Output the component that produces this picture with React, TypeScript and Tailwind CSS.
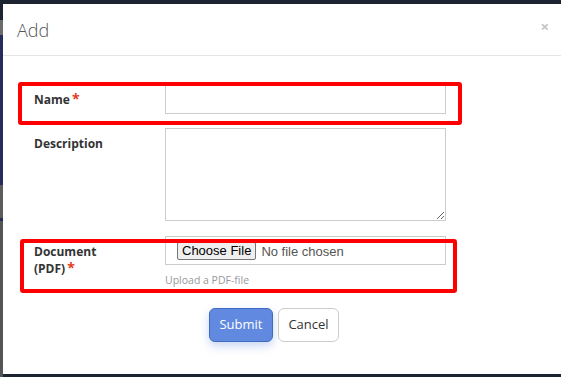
import React from "react";

const Req = () => (
  <span className="ml-[2px] inline-block align-top text-[14px] leading-[15px] text-[#e23b1d]">*</span>
);

const App = () => {
  return (
    <div className="relative flex w-[561px] h-[377px] overflow-hidden bg-[#1c2331] font-['Open_Sans',sans-serif]">
      {/* page behind the modal, only a sliver shows */}
      <div className="flex flex-col w-[3px] shrink-0">
        <div className="h-[20px] bg-[#1c2331]" />
        <div className="h-[15px] bg-[#6b6b6b]" />
        <div className="h-[150px] bg-[#262c5c]" />
        <div className="h-[33px] bg-[#5c5c5c]" />
        <div className="h-[3px] bg-[#262c5c]" />
        <div className="flex-1 bg-[#555]" />
      </div>

      <div className="mt-[4px] h-[370px] flex-1 bg-white flex flex-col">
        <div className="h-[52px] shrink-0 border-b border-[#e5e5e5] flex items-center justify-between pl-[14px] pr-[12px]">
          <h4 className="text-[18px] font-light text-[#555] leading-none">Add</h4>
          <button className="text-[15px] leading-none text-[#c4c4c4] font-bold -mt-[6px]">×</button>
        </div>

        <form className="flex flex-col pl-[31px] pt-[29px]">
          <div className="flex items-start">
            <label className="w-[131px] pt-[6px] text-[12px] leading-[17px] font-bold text-[#333]">
              Name
              <Req />
            </label>
            <input className="w-[281px] h-[29px] border border-[#ccc] px-2 text-[13px] outline-none" />
          </div>

          <div className="flex items-start mt-[14px]">
            <label className="w-[131px] pt-[7px] text-[12px] leading-[17px] font-bold text-[#333]">
              Description
            </label>
            <textarea className="w-[281px] h-[93px] border border-[#ccc] px-2 text-[13px] outline-none resize-y" />
          </div>

          <div className="flex items-start mt-[15px]">
            <label className="w-[131px] pt-[7px] pr-[40px] text-[12px] leading-[17px] font-bold text-[#333]">
              Document (PDF)
              <Req />
            </label>
            <div className="flex flex-col">
              <div className="w-[281px] h-[29px] border border-[#ccc] pl-[11px] flex items-center">
                <input
                  type="file"
                  className="text-[13px] leading-none text-[#555] font-['Liberation_Sans',Arial,sans-serif] file:mr-[5px] file:h-[18px] file:px-[4px] file:border file:border-[#767676] file:rounded-[2px] file:bg-[#efefef] file:text-black"
                />
              </div>
              <p className="mt-[8px] text-[10.5px] leading-[14px] text-[#999]">Upload a PDF-file</p>
            </div>
          </div>

          <div className="flex gap-[5px] mt-[21px] pl-[175px]">
            <button
              type="button"
              className="w-[64px] h-[34px] rounded-[6px] bg-[#6189e0] border border-[#3d6bbf] text-white text-[13px] shadow-[0_4px_10px_rgba(97,137,224,0.35)]"
            >
              Submit
            </button>
            <button
              type="button"
              className="w-[61px] h-[34px] rounded-[6px] bg-white border border-[#ccc] text-[#333] text-[13px]"
            >
              Cancel
            </button>
          </div>
        </form>
      </div>

      {/* red annotation boxes */}
      <div className="absolute left-[18px] top-[82px] w-[444px] h-[43px] border-4 border-[#ff0000] rounded-[3px]" />
      <div className="absolute left-[20px] top-[239px] w-[437px] h-[54px] border-4 border-[#ff0000] rounded-[3px]" />
    </div>
  );
};

export default App;
